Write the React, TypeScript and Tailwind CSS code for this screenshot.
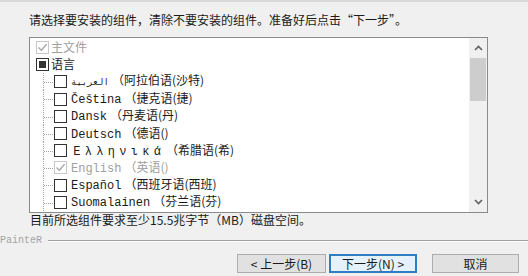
import React from "react";

type CheckState = "done" | "partial" | "off";

type Row = {
  state: CheckState;
  child?: boolean;
  name?: React.ReactNode;
  zh: string;
};

const Greek = () => (
  <span className="inline-flex">
    {["Ε", "λ", "λ", "η", "ν", "ι", "κ", "ά"].map((c, i) => (
      <span key={i} className="inline-block w-[11.5px] text-center">
        {c}
      </span>
    ))}
  </span>
);

const rows: Row[] = [
  { state: "done", zh: "主文件" },
  { state: "partial", zh: "语言" },
  { state: "off", child: true, name: <span className="text-[9px]">العربية</span>, zh: "（阿拉伯语(沙特)" },
  { state: "off", child: true, name: "Čeština", zh: "（捷克语(捷)" },
  { state: "off", child: true, name: "Dansk", zh: "（丹麦语(丹)" },
  { state: "off", child: true, name: "Deutsch", zh: "（德语()" },
  { state: "off", child: true, name: <Greek />, zh: "（希腊语(希)" },
  { state: "done", child: true, name: "English", zh: "（英语()" },
  { state: "off", child: true, name: "Español", zh: "（西班牙语(西班)" },
  { state: "off", child: true, name: "Suomalainen", zh: "（芬兰语(芬)" },
];

const Checkbox: React.FC<{ state: CheckState }> = ({ state }) => {
  if (state === "done") {
    return (
      <span className="flex h-[13px] w-[13px] shrink-0 items-center justify-center border border-[#c8c8c8] bg-white">
        <svg width="11" height="11" viewBox="0 0 11 11">
          <path d="M1.5 5.5 L4.3 8.3 L9.6 2.2" fill="none" stroke="#a6a6a6" strokeWidth="1.3" />
        </svg>
      </span>
    );
  }
  if (state === "partial") {
    return (
      <span className="flex h-[13px] w-[13px] shrink-0 border border-[#333333] bg-white p-[2px]">
        <span className="h-full w-full bg-[#333333]" />
      </span>
    );
  }
  return <span className="h-[13px] w-[13px] shrink-0 border border-[#333333] bg-white" />;
};

// dotted tree connector in front of each child row
const Connector = () => (
  <svg width="24" height="17.4" className="shrink-0">
    <line x1="13.5" y1="0" x2="13.5" y2="17.4" stroke="#a0a0a0" strokeDasharray="1 1" />
    <line x1="14" y1="9.5" x2="23" y2="9.5" stroke="#a0a0a0" strokeDasharray="1 1" />
  </svg>
);

const Chevron: React.FC<{ up?: boolean }> = ({ up }) => (
  <svg width="9" height="6" viewBox="0 0 9 6">
    <polyline
      points={up ? "1,5 4.5,1.5 8,5" : "1,1 4.5,4.5 8,1"}
      fill="none"
      stroke="#606060"
      strokeWidth="1.6"
    />
  </svg>
);

const App: React.FC = () => {
  return (
    <div className="flex h-[276px] w-[528px] flex-col overflow-hidden border-t-2 border-[#d8d8d8] bg-[#f0f0f0] font-['Noto_Sans_CJK_SC',sans-serif] text-[12px] text-[#1a1a1a]">
      <p className="mt-[11px] pl-[29px] leading-[14px]">
        请选择要安装的组件，清除不要安装的组件。准备好后点击“下一步”。
      </p>

      <div className="ml-[29px] mt-[10px] flex h-[176px] w-[459px] border border-[#8a8a8a] bg-white">
        <div className="flex-1 overflow-hidden pt-[1px] font-['Liberation_Mono','Noto_Sans_CJK_SC',monospace]">
          {rows.map((r, i) => (
            <div
              key={i}
              className={`flex h-[17.2px] items-center ${r.child ? "" : "pl-[6px]"} ${
                r.state === "done" ? "text-[#a0a0a0]" : "text-[#1a1a1a]"
              }`}
            >
              {r.child && <Connector />}
              <Checkbox state={r.state} />
              <span className={`${r.child ? "ml-[4px]" : "ml-[2px]"} whitespace-nowrap leading-[14px]`}>
                {r.name}
                <span className={`${r.child ? "ml-[3px]" : ""} font-['Noto_Sans_CJK_SC',sans-serif]`}>{r.zh}</span>
              </span>
            </div>
          ))}
        </div>
        <div className="flex w-[18px] flex-col bg-[#f0f0f0]">
          <div className="flex h-[20px] items-center justify-center">
            <Chevron up />
          </div>
          <div className="mx-[1px] h-[43px] bg-[#cdcdcd]" />
          <div className="flex-1" />
          <div className="flex h-[20px] items-center justify-center">
            <Chevron />
          </div>
        </div>
      </div>

      <p className="mt-[1px] pl-[30px] leading-[12px]">
        目前所选组件要求至少15.5兆字节（MB）磁盘空间。
      </p>

      <div className="mt-[8px] flex h-[14px] items-center">
        <span className="font-['Liberation_Mono',monospace] text-[10px] leading-[14px] text-[#a4a4a4]">
          PainteR
        </span>
        <div className="ml-[6px] h-[2px] flex-1 border-t border-b border-t-[#a0a0a0] border-b-white" />
      </div>

      <div className="mt-[6px] flex h-[19px] justify-end pr-[9px]">
        <button className="flex h-full w-[89px] items-center justify-center border border-[#adadad] bg-[#e1e1e1] leading-none">
          &lt; 上一步(B)
        </button>
        <button className="ml-[3px] flex h-full w-[88px] items-center justify-center border-2 border-[#2f7ec4] bg-[#e5f1fb] leading-none">
          下一步(N) &gt;
        </button>
        <button className="ml-[15px] flex h-full w-[87px] items-center justify-center border border-[#adadad] bg-[#e1e1e1] leading-none">
          取消
        </button>
      </div>
    </div>
  );
};

export default App;
